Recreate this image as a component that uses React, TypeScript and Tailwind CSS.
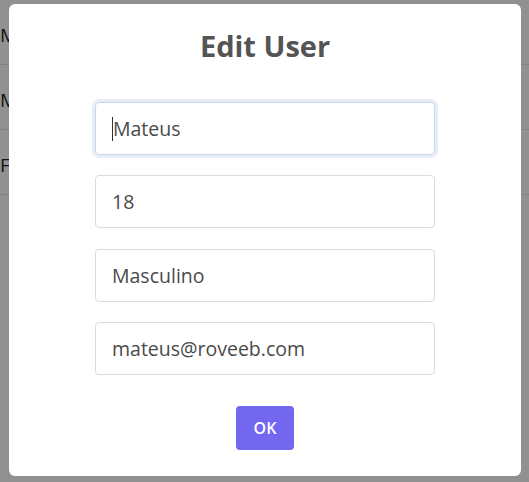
import React from 'react';

export default function App() {
    const rows = ['Mateus', 'Maria', 'Fernanda'];
    const fields = ['Mateus', '18', 'Masculino', 'mateus@roveeb.com'];

    return (
        <div className="relative w-[529px] h-[482px] overflow-hidden bg-white" style={{ fontFamily: '"Open Sans", "Noto Sans", sans-serif' }}>
            {/* Table behind the modal */}
            <div className="flex flex-col">
                {rows.map((name) => (
                    <div key={name} className="h-[65px] flex items-center pt-[6px] border-b border-[#e5e5e5] text-[19px] text-[#212121]">
                        {name}
                    </div>
                ))}
            </div>

            {/* Overlay + modal */}
            <div className="absolute inset-0 bg-black/[0.43] pl-[9px] pt-[4px]">
                <div className="w-[512px] h-[472px] bg-white rounded-[6px] flex flex-col items-center pt-[24px]">
                    <h1 className="text-[29px] leading-[36px] font-bold text-[#545454]">Edit User</h1>
                    <div className="mt-[38px] flex flex-col gap-[20.4px]">
                        {fields.map((val, i) => (
                            <div
                                key={val}
                                className={
                                    i === 0
                                        ? 'w-[340px] h-[53px] rounded-[4px] border border-[#c6d6ee] ring-[3px] ring-[#e8eef8] flex items-center px-[16px] text-[19.5px] text-[#4a4a4a]'
                                        : 'w-[340px] h-[53px] rounded-[4px] border border-[#dcdcdc] flex items-center px-[16px] text-[19.5px] text-[#4a4a4a]'
                                }
                            >
                                {i === 0 && <span className="w-px h-[24px] bg-[#333]" />}
                                <span>{val}</span>
                            </div>
                        ))}
                    </div>
                    <button className="mt-[31px] w-[58px] h-[44px] rounded-[4px] bg-[#7367f0] text-white text-[16px] font-semibold">
                        OK
                    </button>
                </div>
            </div>
        </div>
    );
}
